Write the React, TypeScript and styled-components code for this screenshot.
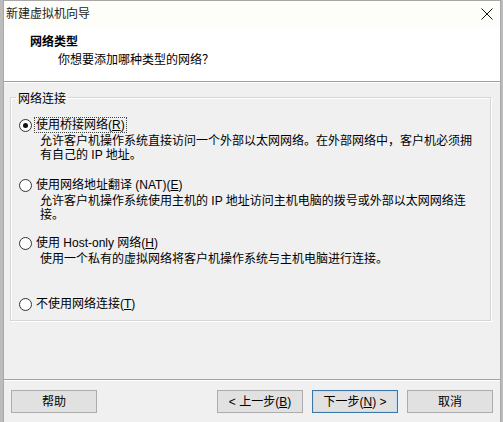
import React from "react";
import styled, { createGlobalStyle } from "styled-components";

const Global = createGlobalStyle`
  html, body { margin: 0; padding: 0; }
  body {
    background: #bcbcbc;
    font-family: "Liberation Sans", "Noto Sans CJK SC", sans-serif;
    font-size: 12px;
    color: #000;
    overflow: hidden;
  }
`;

const Window = styled.div`
  margin-left: 3px;
  width: 496px;
  height: 421px;
  border: 1px solid #a8a8a8;
  border-bottom: none;
  background: #f0f0f0;
  display: flex;
  flex-direction: column;
`;

const Top = styled.div`
  height: 80px;
  background: #fff;
  display: flex;
  flex-direction: column;
  border-bottom: 1px solid #a0a0a0;
  box-shadow: 0 1px 0 #fff;
`;

const TitleBar = styled.div`
  height: 26px;
  background: #fdfdfa;
  display: flex;
  align-items: center;
  justify-content: space-between;
  padding: 0 7px 0 2px;
`;

const TitleText = styled.span`
  color: #222;
  line-height: 14px;
`;

const CloseBtn = styled.div`
  width: 12px;
  height: 12px;
  display: flex;
  align-items: center;
  justify-content: center;
  margin-top: -1px;
`;

const HeaderTitle = styled.div`
  font-weight: bold;
  line-height: 14px;
  margin: 8px 0 0 26px;
`;

const HeaderSub = styled.div`
  line-height: 14px;
  margin: 4px 0 0 54px;
`;

const Group = styled.fieldset`
  margin: 6px 9px 0 6px;
  padding: 12px 0 9px 0;
  border: 1px solid #d6d6d6;
  box-shadow: inset 1px 1px 0 #fff, 1px 1px 0 #fff;
  min-width: 0;
`;

const Legend = styled.legend`
  padding: 4px 2px 0 2px;
  margin-left: 5px;
  line-height: 14px;
`;

const Option = styled.div<{ $gap: number }>`
  margin-top: ${(p) => p.$gap}px;
  display: flex;
  flex-direction: column;
`;

const RadioRow = styled.div`
  display: flex;
  align-items: center;
  height: 14px;
  padding-left: 8px;
`;

const RadioCircle = styled.span<{ $checked?: boolean }>`
  box-sizing: border-box;
  width: 13px;
  height: 13px;
  border-radius: 50%;
  border: 1px solid #333;
  background: #fff;
  display: flex;
  align-items: center;
  justify-content: center;
  margin-right: 3px;
  &::after {
    content: "";
    width: 5px;
    height: 5px;
    border-radius: 50%;
    background: ${(p) => (p.$checked ? "#111" : "transparent")};
  }
`;

const RadioLabel = styled.span<{ $focused?: boolean }>`
  line-height: 14px;
  outline: ${(p) => (p.$focused ? "1px dotted #444" : "none")};
  padding: 0 1px;
`;

const Desc = styled.div`
  margin: 2px 0 0 29px;
  line-height: 14px;
  width: 440px;
`;

const Footer = styled.div`
  margin-top: auto;
  border-top: 1px solid #a0a0a0;
  box-shadow: inset 0 1px 0 #fff;
  height: 43px;
  display: flex;
  align-items: flex-start;
  padding: 10px 7px 0 7px;
  box-sizing: border-box;
`;

const Button = styled.div<{ $focused?: boolean }>`
  box-sizing: border-box;
  width: 86px;
  height: 23px;
  background: #e1e1e1;
  border: 1px solid ${(p) => (p.$focused ? "#3a76a8" : "#adadad")};
  box-shadow: ${(p) => (p.$focused ? "inset 0 0 0 1px #bfe0f8" : "none")};
  display: flex;
  align-items: center;
  justify-content: center;
  line-height: 14px;
`;

const Spacer = styled.div`
  flex: 1;
`;

const RightButtons = styled.div`
  display: flex;
  gap: 9px;
`;

export default function App() {
  return (
    <>
      <Global />
      <Window>
        <Top>
          <TitleBar>
            <TitleText>新建虚拟机向导</TitleText>
            <CloseBtn>
              <svg width="12" height="12" viewBox="0 0 12 12">
                <path d="M0.5 0.5 L11.5 11.5 M11.5 0.5 L0.5 11.5" stroke="#111" strokeWidth="1" fill="none" />
              </svg>
            </CloseBtn>
          </TitleBar>
          <HeaderTitle>网络类型</HeaderTitle>
          <HeaderSub>你想要添加哪种类型的网络？</HeaderSub>
        </Top>
        <Group>
          <Legend>网络连接</Legend>
          <Option $gap={0}>
            <RadioRow>
              <RadioCircle $checked />
              <RadioLabel $focused>使用桥接网络(<u>R</u>)</RadioLabel>
            </RadioRow>
            <Desc>
              允许客户机操作系统直接访问一个外部以太网网络。在外部网络中，客户机必须拥有自己的 IP 地址。
            </Desc>
          </Option>
          <Option $gap={16}>
            <RadioRow>
              <RadioCircle />
              <RadioLabel>使用网络地址翻译 (NAT)(<u>E</u>)</RadioLabel>
            </RadioRow>
            <Desc>
              允许客户机操作系统使用主机的 IP 地址访问主机电脑的拨号或外部以太网网络连接。
            </Desc>
          </Option>
          <Option $gap={14}>
            <RadioRow>
              <RadioCircle />
              <RadioLabel>使用 Host-only 网络(<u>H</u>)</RadioLabel>
            </RadioRow>
            <Desc>使用一个私有的虚拟网络将客户机操作系统与主机电脑进行连接。</Desc>
          </Option>
          <Option $gap={31}>
            <RadioRow>
              <RadioCircle />
              <RadioLabel>不使用网络连接(<u>T</u>)</RadioLabel>
            </RadioRow>
          </Option>
        </Group>
        <Footer>
          <Button>帮助</Button>
          <Spacer />
          <RightButtons>
            <Button>&lt; 上一步(<u>B</u>)</Button>
            <Button $focused>下一步(<u>N</u>) &gt;</Button>
            <Button>取消</Button>
          </RightButtons>
        </Footer>
      </Window>
    </>
  );
}
